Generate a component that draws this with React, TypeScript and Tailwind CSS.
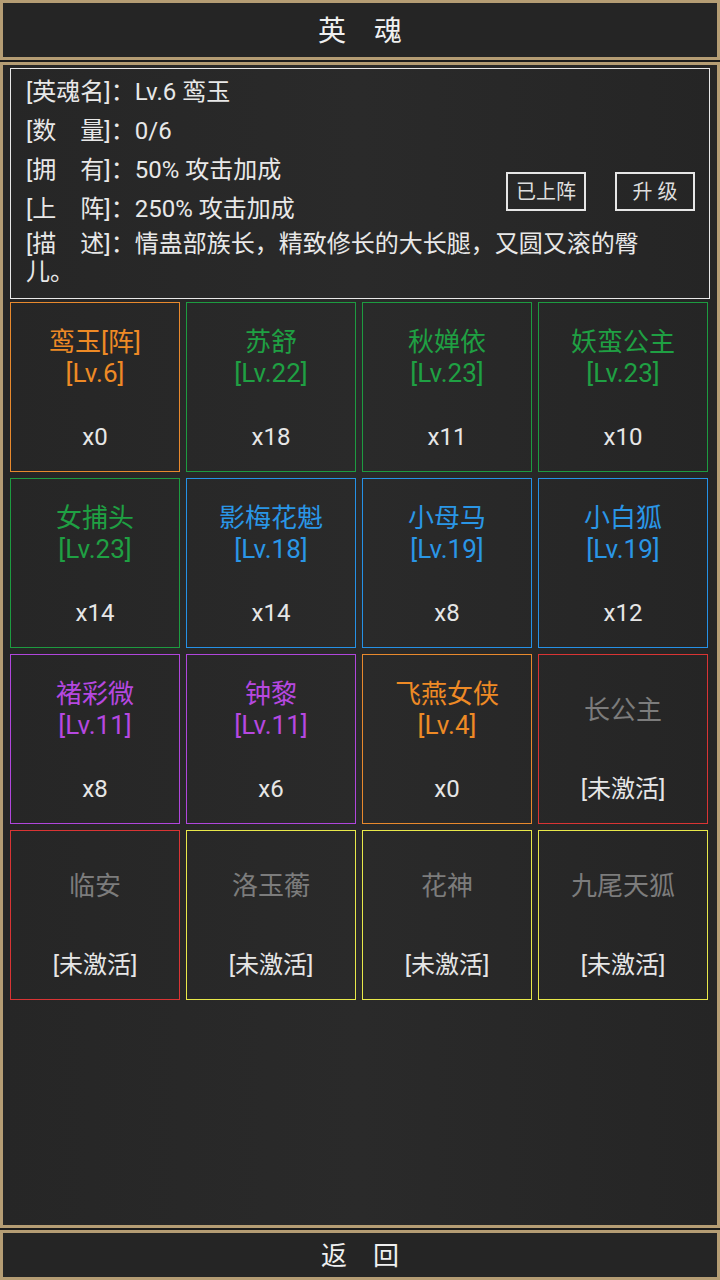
import React from "react";

type Hero = {
  name: string;
  level?: string;
  count?: string;
  border: string;
  text: string;
};

const heroes: Hero[] = [
  { name: "鸾玉[阵]", level: "[Lv.6]", count: "x0", border: "border-[#e8892d]", text: "text-[#ee8a25]" },
  { name: "苏舒", level: "[Lv.22]", count: "x18", border: "border-[#1d9b40]", text: "text-[#1fa043]" },
  { name: "秋婵依", level: "[Lv.23]", count: "x11", border: "border-[#1d9b40]", text: "text-[#1fa043]" },
  { name: "妖蛮公主", level: "[Lv.23]", count: "x10", border: "border-[#1d9b40]", text: "text-[#1fa043]" },
  { name: "女捕头", level: "[Lv.23]", count: "x14", border: "border-[#1d9b40]", text: "text-[#1fa043]" },
  { name: "影梅花魁", level: "[Lv.18]", count: "x14", border: "border-[#2591e6]", text: "text-[#2a96e6]" },
  { name: "小母马", level: "[Lv.19]", count: "x8", border: "border-[#2591e6]", text: "text-[#2a96e6]" },
  { name: "小白狐", level: "[Lv.19]", count: "x12", border: "border-[#2591e6]", text: "text-[#2a96e6]" },
  { name: "褚彩微", level: "[Lv.11]", count: "x8", border: "border-[#b046dc]", text: "text-[#b648e0]" },
  { name: "钟黎", level: "[Lv.11]", count: "x6", border: "border-[#b046dc]", text: "text-[#b648e0]" },
  { name: "飞燕女侠", level: "[Lv.4]", count: "x0", border: "border-[#e8892d]", text: "text-[#ee8a25]" },
  { name: "长公主", border: "border-[#d93434]", text: "text-[#7c7c7c]" },
  { name: "临安", border: "border-[#d93434]", text: "text-[#7c7c7c]" },
  { name: "洛玉蘅", border: "border-[#e8e84a]", text: "text-[#7c7c7c]" },
  { name: "花神", border: "border-[#e8e84a]", text: "text-[#7c7c7c]" },
  { name: "九尾天狐", border: "border-[#e8e84a]", text: "text-[#7c7c7c]" },
];

const info = [
  { label: "[英魂名]：", value: "Lv.6 鸾玉" },
  { label: "[数　量]：", value: "0/6" },
  { label: "[拥　有]：", value: "50% 攻击加成" },
  { label: "[上　阵]：", value: "250% 攻击加成" },
];

const font = "font-['Roboto','Noto_Sans_CJK_SC',sans-serif]";

const HeroCell = ({ hero }: { hero: Hero }) => (
  <div className={`h-[170px] border ${hero.border} flex flex-col items-center pt-[24px]`}>
    <div className={`h-[62px] flex flex-col justify-center items-center text-[26px] leading-[31px] ${hero.text}`}>
      <span>{hero.name}</span>
      {hero.level && <span>{hero.level}</span>}
    </div>
    <div className="mt-[33px] text-[24px] leading-[31px] text-[#e6e6e6]">
      {hero.count ?? "[未激活]"}
    </div>
  </div>
);

export default function App() {
  return (
    <div className={`w-[720px] h-[1280px] bg-[#1c1c1c] flex flex-col gap-[2px] ${font}`}>
      {/* title bar */}
      <div className="h-[60px] border-[3px] border-[#b59d74] bg-[#252525] flex items-center justify-center pt-[4px]">
        <span className="text-[28px] text-[#f0f0f0]">英　魂</span>
      </div>

      {/* main panel */}
      <div className="flex-1 border-[3px] border-[#b59d74] bg-[#272727] bg-gradient-to-r from-[#262626] via-[#2a2a2a] to-[#252525] px-[7px] pt-[3px]">
        <div className="border border-[#e8e8e8] pt-[9px] pb-[12px] pl-[15px] pr-[14px] text-[24px] leading-[28px] text-[#e8e8e8]">
          <div className="flex justify-between">
            <div className="flex flex-col gap-[11px]">
              {info.map((row) => (
                <div key={row.label} className="flex">
                  <span>{row.label}</span>
                  <span>{row.value}</span>
                </div>
              ))}
            </div>
            <div className="self-end mb-[12px] flex gap-[29px]">
              <button className="w-[80px] h-[39px] border-2 border-[#e6e6e6] text-[20px] text-[#dedede] flex items-center justify-center">
                已上阵
              </button>
              <button className="w-[80px] h-[39px] border-2 border-[#e6e6e6] text-[20px] text-[#dedede] flex items-center justify-center">
                升 级
              </button>
            </div>
          </div>
          <div className="mt-[7px] w-[640px]">
            [描　述]：情蛊部族长，精致修长的大长腿，又圆又滚的臀儿。
          </div>
        </div>

        <div className="mt-[3px] grid grid-cols-4 gap-[6px] w-[698px]">
          {heroes.map((h) => (
            <HeroCell key={h.name} hero={h} />
          ))}
        </div>
      </div>

      {/* bottom bar */}
      <div className="h-[50px] border-[3px] border-[#b59d74] bg-[#252525] flex items-center justify-center pt-[3px]">
        <span className="text-[26px] text-[#f0f0f0]">返　回</span>
      </div>
    </div>
  );
}
